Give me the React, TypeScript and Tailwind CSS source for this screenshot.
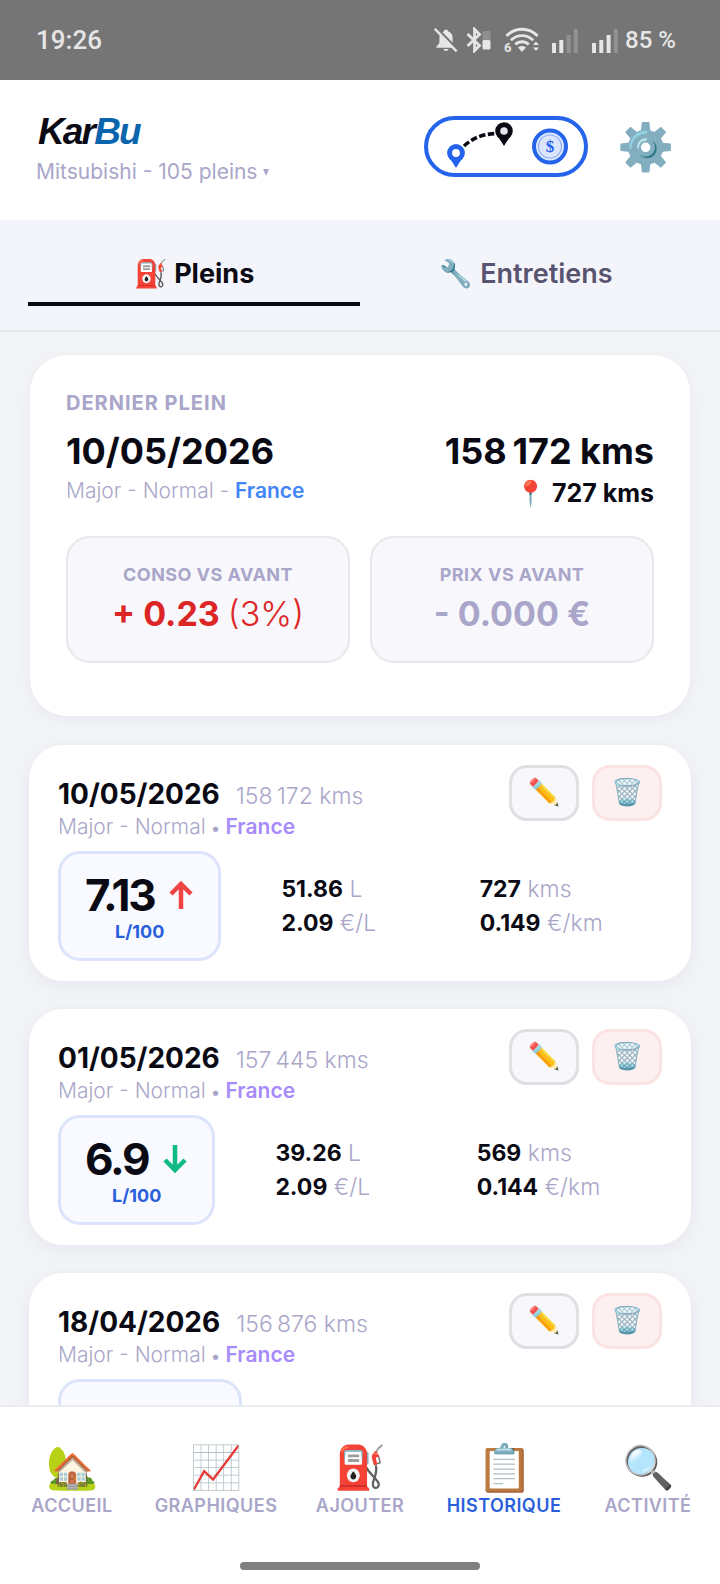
import { useState, type ReactNode } from "react";
import clsx from "clsx";

type Trend = "up" | "down";

type Figures = {
  conso: string;
  trend: Trend;
  liters: string;
  pricePerLiter: string;
  distance: string;
  pricePerKm: string;
};

type Refuel = {
  date: string;
  odometer: string;
  // Missing until the row has been computed
  figures?: Figures;
};

// Narrow no-break space, used as thousands separator
const NNBSP = "\u202f";

const refuels: Refuel[] = [
  {
    date: "10/05/2026",
    odometer: `158${NNBSP}172`,
    figures: {
      conso: "7.13",
      trend: "up",
      liters: "51.86",
      pricePerLiter: "2.09",
      distance: "727",
      pricePerKm: "0.149",
    },
  },
  {
    date: "01/05/2026",
    odometer: `157${NNBSP}445`,
    figures: {
      conso: "6.9",
      trend: "down",
      liters: "39.26",
      pricePerLiter: "2.09",
      distance: "569",
      pricePerKm: "0.144",
    },
  },
  {
    date: "18/04/2026",
    odometer: `156${NNBSP}876`,
  },
];

const navItems = [
  { icon: "🏡", label: "ACCUEIL" },
  { icon: "📈", label: "GRAPHIQUES" },
  { icon: "⛽", label: "AJOUTER" },
  { icon: "📋", label: "HISTORIQUE" },
  { icon: "🔍", label: "ACTIVITÉ" },
];

const tabs = [
  { icon: "⛽", label: "Pleins" },
  { icon: "🔧", label: "Entretiens" },
];

function SignalBars({ level }: { level: number }) {
  return (
    <svg className="w-[27px] h-[25px]" viewBox="0 0 27 25" fill="#e6e6e6">
      {[10, 13, 18, 24].map((h, i) => (
        <rect
          key={h}
          x={i * 7.3}
          y={25 - h}
          width="4"
          height={h}
          opacity={i < level ? 1 : 0.25}
        />
      ))}
    </svg>
  );
}

function StatusBar() {
  return (
    <div className="h-20 shrink-0 bg-[#757575] pl-9 pr-11 flex items-center justify-between text-[#e6e6e6] font-['Roboto',sans-serif] font-medium">
      <span className="text-[26px]">19:26</span>
      <div className="flex items-center">
        {/* Muted bell */}
        <svg className="w-6 h-6 mr-2" viewBox="0 0 24 24">
          <path
            d="M12 1.5c1.2 0 2 .8 2 1.8 3 .9 4.6 3.3 4.6 6.4V15l3 3.8v1H2.4v-1l3-3.800V9.700c0-3.100 1.600-5.500 4.600-6.400 0-1 .8-1.800 2-1.800zM9.400 21h5.200c-.4 1.300-1.300 2-2.600 2s-2.200-.7-2.600-2z"
            fill="#e6e6e6"
          />
          <path d="M2.4 0 24 22.5" stroke="#757575" strokeWidth="3" />
          <path d="M.8.8 22.6 23.4" stroke="#e6e6e6" strokeWidth="2.4" />
        </svg>
        {/* Bluetooth with device battery */}
        <svg className="w-[26px] h-[26px] mr-3" viewBox="0 0 26 26">
          <path
            d="M1.5 7 13.5 18.5 8.5 23.8V2.2l5 5.3L1.5 19"
            fill="none"
            stroke="#e6e6e6"
            strokeWidth="2.8"
          />
          <rect x="16.5" y="4" width="8" height="10" rx="1.5" fill="#8f8f8f" />
          <rect x="16.5" y="13" width="8" height="9.5" rx="1.5" fill="#e6e6e6" />
        </svg>
        {/* Wi-Fi 6 */}
        <svg className="w-9 h-[26px] mr-3 overflow-visible" viewBox="0 0 36 26">
          <g fill="none" stroke="#e6e6e6" strokeWidth="2.8">
            <path d="M2.5 9c8.5-9 22.5-9 31 0" />
            <path d="M6.8 13.3c6.3-6.3 16.1-6.3 22.4 0" />
            <path d="M11.3 17.5c3.8-3.7 9.6-3.7 13.4 0" />
          </g>
          <path d="M14 20.5c2.3-2 5.7-2 8 0l-4 4.5z" fill="#e6e6e6" />
          <path d="m29 18 3-3.5 3 3.500zM29 20.500l3 3.500 3-3.500z" fill="#e6e6e6" />
          <text x="0" y="25" fontSize="13" fontWeight="700" fill="#e6e6e6">
            6
          </text>
        </svg>
        <SignalBars level={2} />
        <span className="w-[13px]" />
        <SignalBars level={3} />
        <span className="ml-[6px] text-[24px]">85 %</span>
      </div>
    </div>
  );
}

function TripCostIcon() {
  return (
    <svg className="w-full h-full" viewBox="0 0 156 53">
      <path
        d="M36 26c9-8 18-12 33-12.5"
        fill="none"
        stroke="#0a0a14"
        strokeWidth="3.6"
        strokeDasharray="6.5 2.5"
      />
      <path d="M21 37 28 48 35 37z" fill="#2563eb" />
      <circle cx="28" cy="33" r="6.4" fill="#fff" stroke="#2563eb" strokeWidth="5" />
      <path d="M69 15 76 26 83 15z" fill="#0a0a14" />
      <circle cx="76" cy="11" r="6.3" fill="#e4e4ec" stroke="#0a0a14" strokeWidth="5" />
      <circle cx="122" cy="26.5" r="16" fill="#dbe6fd" stroke="#2563eb" strokeWidth="4" />
      <circle cx="122" cy="26.5" r="11.5" fill="none" stroke="#8fb0f5" strokeWidth="1.2" />
      <text
        x="122"
        y="31.5"
        textAnchor="middle"
        fontSize="17"
        fontWeight="700"
        fontFamily="Liberation Serif, serif"
        fill="#2563eb"
      >
        $
      </text>
    </svg>
  );
}

function Header() {
  return (
    <header className="shrink-0 bg-white pl-9 pr-[46px] pt-8 pb-8 flex items-start justify-between">
      <div>
        <h1 className="pl-[2px] font-['Liberation_Sans',sans-serif] text-[37px] leading-10 font-bold italic tracking-tighter">
          Kar<span className="text-[#0b65ad]">Bu</span>
        </h1>
        <button className="mt-1 flex items-center gap-[6px] text-[21px] leading-8 text-[#a9a6c9]">
          Mitsubishi - 105 pleins
          <svg className="w-[6px] h-[7px]" viewBox="0 0 6 7">
            <path d="M0 0h6L3 7z" fill="currentColor" />
          </svg>
        </button>
      </div>
      <div className="pt-1 flex items-start gap-[29px]">
        <button
          aria-label="Coût du trajet"
          className="w-[164px] h-[61px] rounded-full border-4 border-[#2563eb]"
        >
          <TripCostIcon />
        </button>
        <button aria-label="Réglages" className="text-[46px] leading-[60px]">
          ⚙️
        </button>
      </div>
    </header>
  );
}

function DeltaBox({ label, children }: { label: string; children: ReactNode }) {
  return (
    <div className="rounded-3xl border-2 border-[#e7e7ec] bg-[#f7f7fc] pt-[25px] pb-5 text-center">
      <p className="text-[18px] leading-6 font-bold tracking-wide text-[#a9a6c9]">{label}</p>
      <p className="text-[34px] leading-[54px] font-bold">{children}</p>
    </div>
  );
}

function LastRefuelCard() {
  return (
    <section className="rounded-[38px] border border-[#ededf1] bg-white px-9 pt-9 pb-[53px] shadow-[0_4px_16px_rgba(20,20,50,0.04)]">
      <h2 className="mb-3 text-[20px] leading-6 font-bold tracking-wider text-[#a9a6c9]">
        DERNIER PLEIN
      </h2>
      <div className="flex justify-between">
        <div>
          <p className="text-[36px] leading-[48px] font-bold">10/05/2026</p>
          <p className="text-[21px] leading-8 font-light text-[#a9a6c9]">
            Major - Normal - <span className="font-semibold text-[#4285f4]">France</span>
          </p>
        </div>
        <div className="text-right">
          <p className="text-[36px] leading-[48px] font-bold">158{NNBSP}172 kms</p>
          <p className="text-[25px] leading-9 font-bold">📍 727 kms</p>
        </div>
      </div>
      <div className="mt-[25px] grid grid-cols-2 gap-5">
        <DeltaBox label="CONSO VS AVANT">
          <span className="text-[#dc2626]">
            + 0.23 <span className="font-light">(3%)</span>
          </span>
        </DeltaBox>
        <DeltaBox label="PRIX VS AVANT">
          <span className="text-[#a9a6c9]">- 0.000 €</span>
        </DeltaBox>
      </div>
    </section>
  );
}

function TrendArrow({ trend }: { trend: Trend }) {
  return (
    <svg
      className={clsx("w-[26px] h-[30px]", trend === "up" ? "text-[#ef4444]" : "text-[#10b981]")}
      viewBox="0 0 26 30"
      fill="none"
      stroke="currentColor"
      strokeWidth="4.5"
    >
      {trend === "up" ? <path d="M13 29V4M3 14 13 4l10 10" /> : <path d="M13 1v25M3 16l10 10 10-10" />}
    </svg>
  );
}

function Measure({ value, unit }: { value: string; unit: string }) {
  return (
    <p className="text-[23px] leading-[34px] font-light text-[#a9a6c9]">
      <span className="font-bold text-[#0a0a14]">{value}</span> {unit}
    </p>
  );
}

function RefuelFigures({ figures }: { figures?: Figures }) {
  if (!figures) {
    return (
      <div className="mt-3 w-[184px] h-[110px] rounded-[22px] border-3 border-[#dbe4fb] bg-[#f9faff]" />
    );
  }

  return (
    <div className="mt-3 flex items-center gap-[60px]">
      <div className="rounded-[22px] border-3 border-[#dbe4fb] bg-[#f9faff] px-6 pt-[14px] pb-4 text-center">
        <div className="flex items-center gap-[14px]">
          <span className="text-[44px] leading-[54px] font-bold tracking-tighter">{figures.conso}</span>
          <TrendArrow trend={figures.trend} />
        </div>
        <p className="text-[18px] leading-5 font-bold text-[#2a5fdc]">L/100</p>
      </div>
      <div className="flex-1 grid grid-cols-2 gap-x-4">
        <Measure value={figures.liters} unit="L" />
        <Measure value={figures.distance} unit="kms" />
        <Measure value={figures.pricePerLiter} unit="€/L" />
        <Measure value={figures.pricePerKm} unit="€/km" />
      </div>
    </div>
  );
}

function RefuelCard({ refuel }: { refuel: Refuel }) {
  return (
    <li className="rounded-[34px] bg-white px-[29px] py-5 shadow-[0_4px_20px_rgba(20,20,50,0.06)]">
      <div className="flex items-start justify-between">
        <div className="pt-2">
          <p className="flex items-baseline gap-4 text-[28px] leading-[42px] font-bold">
            {refuel.date}
            <span className="text-[23px] leading-6 font-light text-[#a9a6c9]">
              {refuel.odometer} kms
            </span>
          </p>
          <p className="text-[21px] leading-6 font-light text-[#a9a6c9]">
            Major - Normal <span className="text-[17px] leading-none font-bold">•</span>{" "}
            <span className="font-semibold text-[#a78bfa]">France</span>
          </p>
        </div>
        <div className="flex gap-[13px] text-[26px]">
          <button
            aria-label="Modifier"
            className="w-[70px] h-14 pb-[3px] rounded-[18px] border-3 border-[#e0e0e4] bg-[#f7f7fc]"
          >
            ✏️
          </button>
          <button
            aria-label="Supprimer"
            className="w-[70px] h-14 pb-[3px] rounded-[18px] border-3 border-[#fce3e3] bg-[#fdf0f0]"
          >
            🗑️
          </button>
        </div>
      </div>
      <RefuelFigures figures={refuel.figures} />
    </li>
  );
}

export default function App() {
  const [activeTab, setActiveTab] = useState("Pleins");
  const [activeNav, setActiveNav] = useState("HISTORIQUE");

  return (
    <div className="h-screen flex flex-col bg-[#f3f4f8] font-['Inter',sans-serif] text-[#0a0a14]">
      <StatusBar />
      <Header />

      <div className="shrink-0 flex px-7 pt-5 pb-6 border-b-2 border-[#e6e7ec] bg-[#f4f5fa]">
        {tabs.map(({ icon, label }) => (
          <button
            key={label}
            onClick={() => setActiveTab(label)}
            className={clsx(
              "flex-1 pt-4 pb-[10px] border-b-4 text-[27px] leading-9",
              activeTab === label
                ? "border-[#0a0a14] font-bold"
                : "border-transparent font-semibold text-[#58536f]"
            )}
          >
            {icon} {label}
          </button>
        ))}
      </div>

      <main className="flex-1 min-h-0 overflow-y-auto [scrollbar-width:none] px-[29px] pt-[22px] pb-7">
        <LastRefuelCard />
        <ul className="mt-7 flex flex-col gap-7">
          {refuels.map((refuel) => (
            <RefuelCard key={refuel.date} refuel={refuel} />
          ))}
        </ul>
      </main>

      <nav className="shrink-0 bg-white border-t-2 border-[#ebecf0] pt-[33px] pb-[14px]">
        <div className="grid grid-cols-5">
          {navItems.map(({ icon, label }) => (
            <button
              key={label}
              onClick={() => setActiveNav(label)}
              className={clsx(
                "flex flex-col items-center text-[18px] leading-6 font-semibold tracking-wide",
                activeNav === label ? "text-[#2a5fdc]" : "text-[#a9a6c9]"
              )}
            >
              <span
                className={clsx(
                  "h-[54px] leading-[54px] tracking-normal",
                  activeNav === label ? "text-[46px]" : "text-[42px]"
                )}
              >
                {icon}
              </span>
              {label}
            </button>
          ))}
        </div>
        {/* Home indicator */}
        <div className="mx-auto mt-11 w-1/3 h-2 rounded-full bg-[#808080]" />
      </nav>
    </div>
  );
}
